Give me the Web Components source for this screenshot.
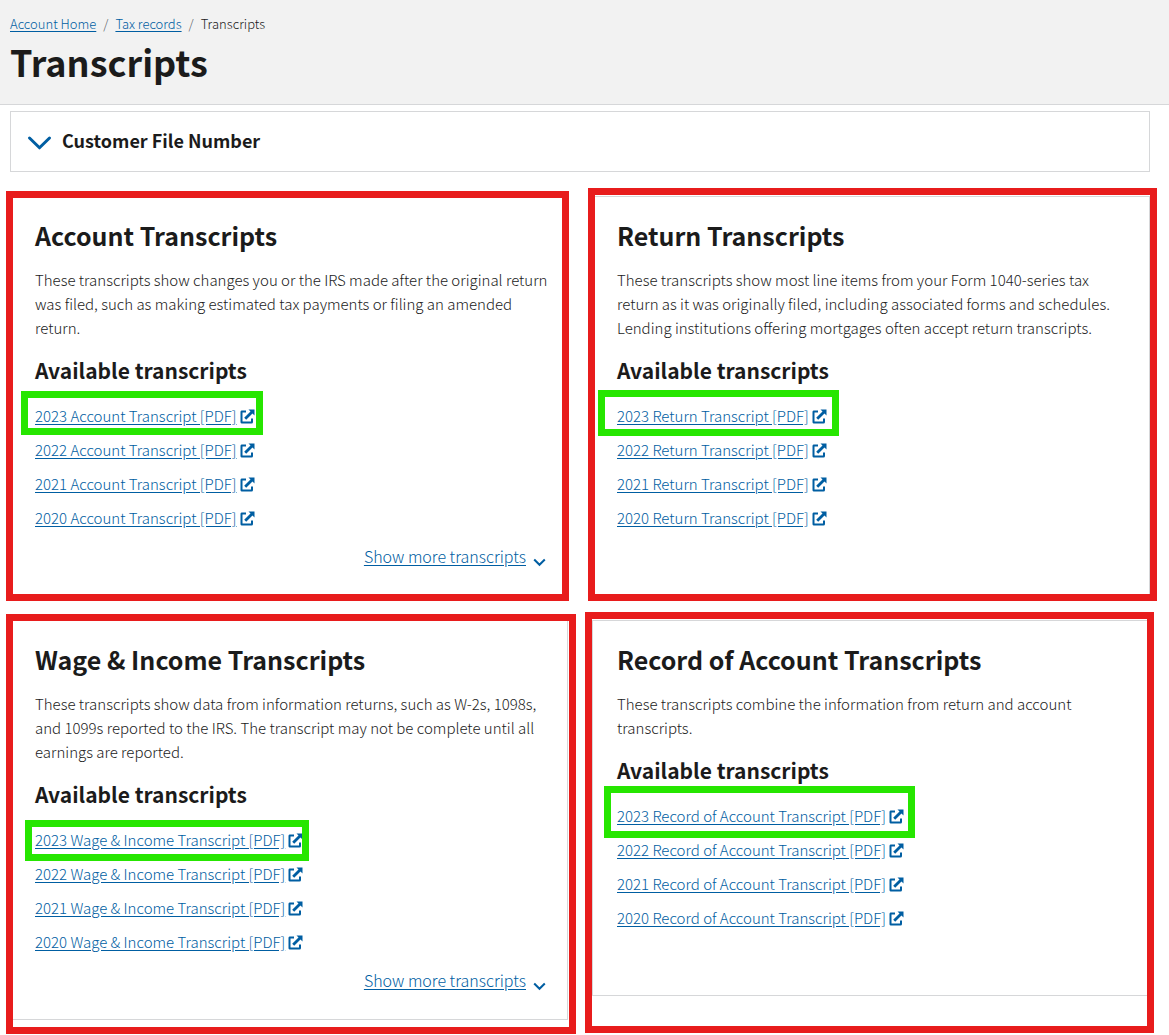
<!DOCTYPE html>
<html lang="en">
<head>
<meta charset="utf-8">
<meta name="viewport" content="width=device-width, initial-scale=1">
<title>Transcripts</title>
<style>
  body {
    --ink: #1b1b1b;
    --link: #005ea2;
    --line: #d6d7d9;
    margin: 0;
    background: #fff;
    color: var(--ink);
    font: 300 15px/24px "Noto Sans CJK SC", "Noto Sans", sans-serif;
  }
</style>
</head>
<body>
<transcripts-page></transcripts-page>

<template id="page-tpl">
  <style>
    :host { display: block; }
    main { padding: 6px 19px 15px 10px; }
    .grid { display: grid; grid-template-columns: 1fr 1fr; gap: 24px; align-items: start; margin-top: 24px; }
  </style>
  <page-header heading="Transcripts">
    <a href="#home">Account Home</a>
    <a href="#records">Tax records</a>
    <span>Transcripts</span>
  </page-header>
  <main>
    <file-number-panel>Customer File Number</file-number-panel>
    <div class="grid">
      <transcript-card heading="Account Transcripts" kind="Account Transcript" more frame="-5px -1px -5px -4px" mark="-13px -8px -7px -14px">These transcripts show changes you or the IRS made after the original return was filed, such as making estimated tax payments or filing an amended return.</transcript-card>
      <transcript-card heading="Return Transcripts" kind="Return Transcript" frame="-8px -7px -5px -4px" mark="-14px -12px -8px -19px">These transcripts show most line items from your Form 1040-series tax return as it was originally filed, including associated forms and schedules. Lending institutions offering mortgages often accept return transcripts.</transcript-card>
      <transcript-card heading="Wage &amp; Income Transcripts" kind="Wage &amp; Income Transcript" more frame="-6px -8px -14px -4px" mark="-8px -6px -9px -10px">These transcripts show data from information returns, such as W-2s, 1098s, and 1099s reported to the IRS. The transcript may not be complete until all earnings are reported.</transcript-card>
      <transcript-card heading="Record of Account Transcripts" kind="Record of Account Transcript" frame="-8px -4px -37px -7px" mark="-18px -11px -10px -13px">These transcripts combine the information from return and account transcripts.</transcript-card>
    </div>
  </main>
</template>

<template id="header-tpl">
  <style>
    :host { display: block; background: #f2f2f2; border-bottom: 1px solid var(--line); padding: 12px 10px 19px; }
    nav { display: flex; font-size: 13px; line-height: 24px; }
    ::slotted(a) { color: var(--link); text-underline-offset: 2px; }
    .sep { padding: 0 7px; color: #565c65; }
    h1 { margin: 1px 0 0; font-size: 36px; line-height: 48px; font-weight: 700; }
  </style>
  <nav aria-label="Breadcrumb"></nav>
  <h1></h1>
</template>

<template id="panel-tpl">
  <style>
    :host { display: block; border: 1px solid var(--line); }
    button { display: flex; align-items: center; gap: 10px; width: 100%; padding: 16px 16px 19px; border: 0; background: none; color: inherit; font: 700 18px/24px "Noto Sans CJK SC", sans-serif; text-align: left; cursor: pointer; }
    svg { display: block; width: 25px; height: 16px; margin-top: 5px; fill: none; stroke: var(--link); stroke-width: 3; stroke-linecap: round; stroke-linejoin: round; }
  </style>
  <button type="button" aria-expanded="false">
    <svg viewBox="0 0 25 16" aria-hidden="true"><path d="M2.500 3 12.500 12.800 22.500 3"/></svg>
    <span><slot></slot></span>
  </button>
</template>

<template id="card-tpl">
  <style>
    :host { display: block; position: relative; }
    section { border: 1px solid var(--line); padding: 22px 24px 27px; }
    h2 { margin: 0; font-size: 25px; line-height: 32px; font-weight: 700; }
    p { margin: 17px -6px 16px 0; }
    h3 { margin: 0 0 20px; font-size: 21px; line-height: 28px; font-weight: 700; }
    ul { list-style: none; margin: 0; padding: 0; display: grid; gap: 10px; }
    li { display: flex; }
    footer { display: flex; justify-content: flex-end; min-height: 24px; margin-top: 14px; }
    button { display: flex; gap: 7px; align-items: center; margin-right: -3px; padding: 0; border: 0; background: none; color: var(--link); font: inherit; font-size: 16px; line-height: 24px; text-decoration: underline; text-underline-offset: 2px; cursor: pointer; }
    button svg { width: 13px; height: 9px; margin-top: 12px; fill: none; stroke: currentColor; stroke-width: 2; }
  </style>
  <section>
    <h2></h2>
    <p><slot></slot></p>
    <h3>Available transcripts</h3>
    <ul></ul>
    <footer></footer>
  </section>
  <highlight-frame></highlight-frame>
</template>

<template id="link-tpl">
  <style>
    :host { display: block; position: relative; }
    a { display: flex; align-items: center; gap: 3px; color: var(--link); text-decoration: none; }
    span { text-decoration: underline; text-underline-offset: 2px; }
    svg { width: 15px; height: 15px; fill: currentColor; }
  </style>
  <a href="#pdf"><span><slot></slot></span>
    <svg viewBox="0 0 15 15" aria-hidden="true"><path d="M1.500 1.500H6v2H2.500v9H11V9.500h2v3.500a1.500 1.500 0 0 1-1.500 1.500h-10A1.500 1.500 0 0 1 .5 13V3A1.500 1.500 0 0 1 1.500 1.500ZM8.500.5h6v6l-2-2-6.300 6.300-2-2L10.500 2.500Z"/></svg></a>
</template>

<script>
  const stamp = (el, id) => {
    const root = el.attachShadow({ mode: "open" });
    root.append(document.getElementById(id).content.cloneNode(true));
    return root;
  };

  class HighlightFrame extends HTMLElement {
    connectedCallback() {
      if (this.shadowRoot) return;
      this.attachShadow({ mode: "open" }).innerHTML =
        `<style>:host { position: absolute; inset: var(--frame-inset); box-sizing: border-box; border: 7px solid var(--frame-color, #e81c1c); pointer-events: none; }</style>`;
    }
  }

  class TranscriptLink extends HTMLElement {
    connectedCallback() {
      if (this.shadowRoot) return;
      const root = stamp(this, "link-tpl");
      const mark = this.getAttribute("mark");
      if (mark) {
        const frame = document.createElement("highlight-frame");
        frame.style.setProperty("--frame-inset", mark);
        frame.style.setProperty("--frame-color", "#26e600");
        root.append(frame);
      }
    }
  }

  class TranscriptCard extends HTMLElement {
    connectedCallback() {
      if (this.shadowRoot) return;
      const root = stamp(this, "card-tpl");
      root.querySelector("h2").textContent = this.getAttribute("heading");
      root.querySelector("highlight-frame").style.setProperty("--frame-inset", this.getAttribute("frame"));
      const list = root.querySelector("ul");
      for (const year of [2023, 2022, 2021, 2020]) {
        const item = document.createElement("li");
        const link = document.createElement("transcript-link");
        link.textContent = `${year} ${this.getAttribute("kind")} [PDF]`;
        if (year === 2023) link.setAttribute("mark", this.getAttribute("mark"));
        item.append(link);
        list.append(item);
      }
      if (this.hasAttribute("more")) {
        root.querySelector("footer").innerHTML =
          `<button type="button"><span>Show more transcripts</span><svg viewBox="0 0 13 9" aria-hidden="true"><path d="M1.200 1.500 6.500 6.800 11.800 1.500"/></svg></button>`;
      }
    }
  }

  class FileNumberPanel extends HTMLElement {
    connectedCallback() { if (!this.shadowRoot) stamp(this, "panel-tpl"); }
  }

  class PageHeader extends HTMLElement {
    connectedCallback() {
      if (this.shadowRoot) return;
      const root = stamp(this, "header-tpl");
      root.querySelector("h1").textContent = this.getAttribute("heading");
      const nav = root.querySelector("nav");
      [...this.children].forEach((crumb, i) => {
        crumb.slot = `crumb-${i}`;
        if (i) {
          const sep = document.createElement("span");
          sep.className = "sep";
          sep.textContent = "/";
          nav.append(sep);
        }
        const slot = document.createElement("slot");
        slot.name = crumb.slot;
        nav.append(slot);
      });
    }
  }

  class TranscriptsPage extends HTMLElement {
    connectedCallback() { if (!this.shadowRoot) stamp(this, "page-tpl"); }
  }

  customElements.define("highlight-frame", HighlightFrame);
  customElements.define("transcript-link", TranscriptLink);
  customElements.define("transcript-card", TranscriptCard);
  customElements.define("file-number-panel", FileNumberPanel);
  customElements.define("page-header", PageHeader);
  customElements.define("transcripts-page", TranscriptsPage);
</script>
</body>
</html>
